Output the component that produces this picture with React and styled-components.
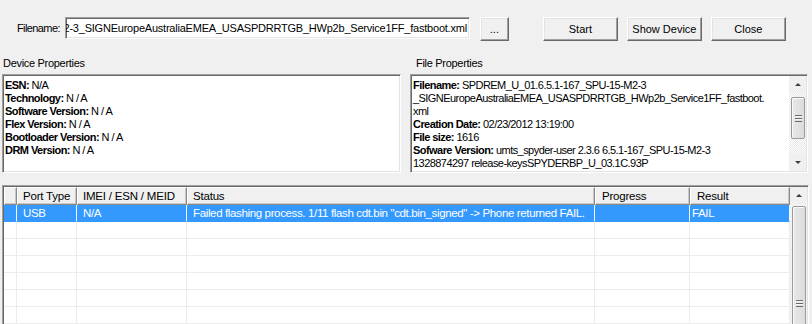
import React from 'react';
import styled, { createGlobalStyle } from 'styled-components';

const Global = createGlobalStyle`
  html, body { margin: 0; padding: 0; background: #f0f0f0; }
  body { width: 812px; height: 324px; overflow: hidden; }
`;

const Window = styled.div`
  width: 812px;
  height: 324px;
  overflow: hidden;
  background: #f0f0f0;
  display: flex;
  flex-direction: column;
  font-family: "Liberation Sans", Arial, sans-serif;
  font-size: 11px;
  color: #000;
`;

const TopBar = styled.div`
  display: flex;
  align-items: flex-start;
  padding: 17px 0 0 17px;
  height: 24px;
  flex: none;
`;

const FieldLabel = styled.span`
  line-height: 22px;
  letter-spacing: -0.6px;
  margin-right: 5px;
`;

const PathField = styled.div`
  width: 405px;
  height: 22px;
  box-sizing: border-box;
  background: #fff;
  border: 1px solid;
  border-color: #a0a0a0 #fff #fff #a0a0a0;
  box-shadow: inset 1px 1px 0 #696969, inset -1px -1px 0 #e3e3e3;
  display: flex;
  justify-content: flex-end;
  align-items: center;
  overflow: hidden;
  padding: 0 2px;
  white-space: nowrap;
  letter-spacing: -0.22px;
  font-size: 11px;
`;

const Button = styled.button`
  font-family: "Liberation Sans", Arial, sans-serif;
  font-size: 11px;
  color: #000;
  width: ${p => p.$w}px;
  height: 24px;
  margin-left: ${p => p.$ml}px;
  padding: 0;
  background: #f0f0f0;
  border: 1px solid;
  border-color: #fff #696969 #696969 #fff;
  box-shadow: inset -1px -1px 0 #a0a0a0, inset 1px 1px 0 #e3e3e3;
  cursor: default;
`;

const PropsRow = styled.div`
  display: grid;
  grid-template-columns: 399px 398px;
  column-gap: 9px;
  margin: 16px 0 0 2px;
  flex: none;
`;

const PropsGroup = styled.div`
  display: flex;
  flex-direction: column;
`;

const GroupLabel = styled.div`
  line-height: 13px;
  height: 13px;
  padding-left: ${p => p.$indent}px;
  margin-bottom: 4px;
  letter-spacing: -0.3px;
`;

const PropBox = styled.div`
  height: 99px;
  box-sizing: border-box;
  background: #fff;
  border: 1px solid;
  border-color: #a0a0a0 #fff #fff #a0a0a0;
  box-shadow: inset 1px 1px 0 #696969, inset -1px -1px 0 #e3e3e3;
  padding: 1px;
  display: flex;
  overflow: hidden;
`;

const PropText = styled.div`
  flex: 1;
  padding: ${p => p.$pt}px 0 0 ${p => p.$pl}px;
  overflow: hidden;
`;

const PropLine = styled.div`
  line-height: 13px;
  height: 13px;
  white-space: nowrap;
  letter-spacing: -0.55px;
  b { font-weight: bold; }
`;

const VScroll = styled.div`
  width: 17px;
  flex: none;
  display: flex;
  flex-direction: column;
  background-color: #f4f4f4;
  background-image: repeating-conic-gradient(#ffffff 0 25%, #e6e6e6 0 50%);
  background-size: 2px 2px;
`;

const ArrowCell = styled.div`
  height: ${p => p.$h}px;
  flex: none;
  display: flex;
  align-items: center;
  justify-content: center;
  background: #f0f0f0;
  &::after {
    content: "";
    width: 0;
    height: 0;
    border-left: 3px solid transparent;
    border-right: 3px solid transparent;
    ${p => p.$down
      ? 'border-top: 3px solid #3c3c3c;'
      : 'border-bottom: 3px solid #3c3c3c;'}
  }
`;

const Spacer = styled.div`
  height: ${p => p.$h}px;
  flex: ${p => (p.$grow ? 1 : 'none')};
`;

const Thumb = styled.div`
  height: ${p => p.$h}px;
  flex: none;
  margin: 0 1px 0 2px;
  box-sizing: border-box;
  background: linear-gradient(to right, #e8e8e8, #dcdcdc);
  border: 1px solid #9a9a9a;
  border-radius: 2px;
  box-shadow: inset 1px 1px 0 #fafafa;
  display: flex;
  align-items: ${p => (p.$gripTop ? 'flex-start' : 'center')};
  padding-top: ${p => p.$gripTop || 0}px;
  justify-content: center;
`;

const Grip = styled.div`
  width: 7px;
  height: 7px;
  background: repeating-linear-gradient(to bottom, #6a6a6a 0 1px, #f6f6f6 1px 2px, transparent 2px 3px);
  flex: none;
`;

const Table = styled.div`
  margin: 12px 0 0 2px;
  width: 807px;
  flex: 1;
  min-height: 0;
  box-sizing: border-box;
  background: #fff;
  border: 1px solid;
  border-bottom: none;
  border-color: #a0a0a0 #fff #fff #a0a0a0;
  box-shadow: inset 1px 1px 0 #696969, inset -1px 0 0 #e3e3e3;
  padding: 1px 1px 0 1px;
  display: flex;
  overflow: hidden;
`;

const Grid = styled.div`
  display: grid;
  grid-template-columns: 13px 60px 110px 408px 95px 100px;
  grid-template-rows: 18px;
  grid-auto-rows: 17px;
  align-content: start;
  flex: none;
  font-size: 11.5px;
`;

const HeaderCell = styled.div`
  box-sizing: border-box;
  background: #f0f0f0;
  border: 1px solid;
  border-color: #fff #8a8a8a #8a8a8a #fff;
  box-shadow: inset -1px -1px 0 #c8c8c8;
  padding-left: ${p => p.$pl}px;
  line-height: 16px;
  white-space: nowrap;
  overflow: hidden;
  letter-spacing: -0.2px;
`;

const Cell = styled.div`
  box-sizing: border-box;
  background: ${p => (p.$selected ? '#3399ff' : '#fff')};
  color: ${p => (p.$selected ? '#fff' : '#000')};
  border-right: 1px solid ${p => (p.$selected ? '#f4f8ff' : '#ececec')};
  border-bottom: 1px solid ${p => (p.$selected ? '#3399ff' : '#ececec')};
  padding-left: ${p => p.$pl}px;
  line-height: 16px;
  white-space: nowrap;
  overflow: hidden;
  letter-spacing: -0.36px;
`;

const columns = [
  { title: '', pl: 0, bodyPl: 0 },
  { title: 'Port Type', pl: 5, bodyPl: 6 },
  { title: 'IMEI / ESN / MEID', pl: 5, bodyPl: 6 },
  { title: 'Status', pl: 5, bodyPl: 6 },
  { title: 'Progress', pl: 6, bodyPl: 6 },
  { title: 'Result', pl: 6, bodyPl: 2 },
];

const rows = [
  ['', 'USB', 'N/A', 'Failed flashing process. 1/11 flash cdt.bin "cdt.bin_signed" -> Phone returned FAIL.', '', 'FAIL'],
  ['', '', '', '', '', ''],
  ['', '', '', '', '', ''],
  ['', '', '', '', '', ''],
  ['', '', '', '', '', ''],
  ['', '', '', '', '', ''],
  ['', '', '', '', '', ''],
  ['', '', '', '', '', ''],
];

const deviceProps = [
  ['ESN:', ' N/A'],
  ['Technology:', ' N / A'],
  ['Software Version:', ' N / A'],
  ['Flex Version:', ' N / A'],
  ['Bootloader Version:', ' N / A'],
  ['DRM Version:', ' N / A'],
];

const fileProps = [
  ['Filename:', ' SPDREM_U_01.6.5.1-167_SPU-15-M2-3'],
  [null, '_SIGNEuropeAustraliaEMEA_USASPDRRTGB_HWp2b_Service1FF_fastboot.'],
  [null, 'xml'],
  ['Creation Date:', ' 02/23/2012 13:19:00'],
  ['File size:', ' 1616'],
  ['Sofware Version:', ' umts_spyder-user 2.3.6 6.5.1-167_SPU-15-M2-3'],
  [null, '1328874297 release-keysSPYDERBP_U_03.1C.93P'],
];

const Lines = ({ items }) =>
  items.map(([k, v], i) => (
    <PropLine key={i}>
      {k && <b>{k}</b>}
      {v}
    </PropLine>
  ));

export default function App() {
  return (
    <Window>
      <Global />
      <TopBar>
        <FieldLabel>Filename:</FieldLabel>
        <PathField>SPDREM_U_01.6.5.1-167_SPU-15-M2-3_SIGNEuropeAustraliaEMEA_USASPDRRTGB_HWp2b_Service1FF_fastboot.xml</PathField>
        <Button $w={29} $ml={10}>...</Button>
        <Button $w={75} $ml={34}>Start</Button>
        <Button $w={75} $ml={9}>Show Device</Button>
        <Button $w={75} $ml={9}>Close</Button>
      </TopBar>

      <PropsRow>
        <PropsGroup>
          <GroupLabel $indent={1}>Device Properties</GroupLabel>
          <PropBox>
            <PropText $pt={3} $pl={1}>
              <Lines items={deviceProps} />
            </PropText>
          </PropBox>
        </PropsGroup>
        <PropsGroup>
          <GroupLabel $indent={6}>File Properties</GroupLabel>
          <PropBox>
            <PropText $pt={3} $pl={1}>
              <Lines items={fileProps} />
            </PropText>
            <VScroll>
              <ArrowCell $h={17} />
              <Spacer $h={4} />
              <Thumb $h={42}><Grip /></Thumb>
              <Spacer $grow />
              <ArrowCell $h={17} $down />
            </VScroll>
          </PropBox>
        </PropsGroup>
      </PropsRow>

      <Table>
        <Grid>
          {columns.map((c, i) => (
            <HeaderCell key={i} $pl={c.pl}>{c.title}</HeaderCell>
          ))}
          {rows.map((r, ri) =>
            r.map((v, ci) => (
              <Cell key={`${ri}-${ci}`} $selected={ri === 0} $pl={columns[ci].bodyPl}>{v}</Cell>
            ))
          )}
        </Grid>
        <VScroll>
          <ArrowCell $h={17} />
          <Spacer $h={2} />
          <Thumb $h={140} $gripTop={93}><Grip /></Thumb>
        </VScroll>
      </Table>
    </Window>
  );
}
